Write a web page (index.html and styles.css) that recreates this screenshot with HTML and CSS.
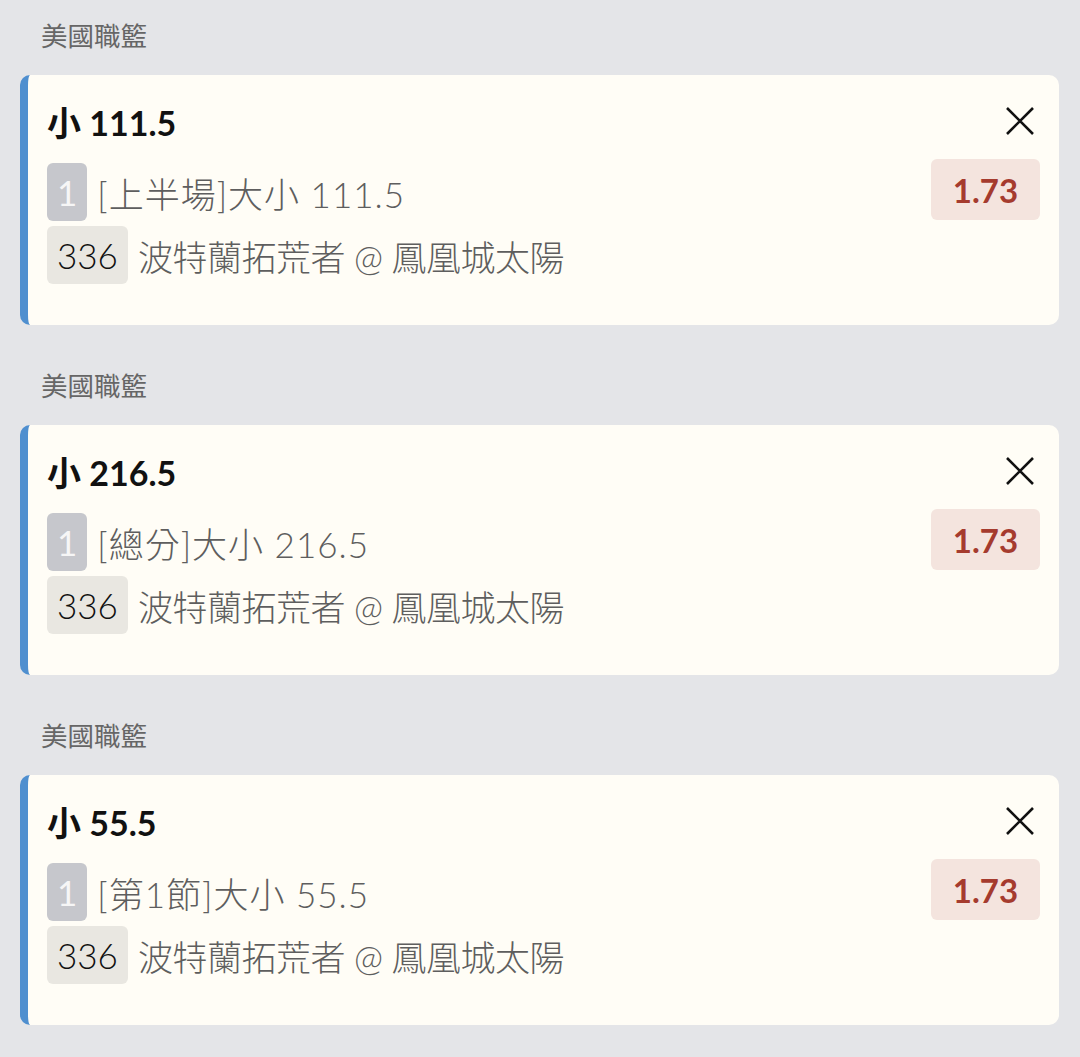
FILE: index.html
```html
<!DOCTYPE html>
<html lang="zh-Hant">
  <head>
    <meta charset="UTF-8" />
    <meta name="viewport" content="width=device-width, initial-scale=1.0" />
    <title>投注單</title>
    <link rel="stylesheet" href="styles.css">
  </head>
  <body>
    <!-- Bet slip: one group per selection -->
    <div class="slip">
      <section class="group">
        <div class="league">美國職籃</div>
        <div class="bet">
          <div class="bet-head">
            <div class="pick">小 111.5</div>
            <button class="close" aria-label="remove">
              <svg viewBox="0 0 30 30" width="30" height="30"><path d="M2 2 L28 28 M28 2 L2 28" stroke="#111" stroke-width="2.6" fill="none"/></svg>
            </button>
          </div>
          <div class="bet-body">
            <div class="lines">
              <div class="line"><span class="tag tag-period">1</span><span class="market">[上半場]大小 111.5</span></div>
              <div class="line"><span class="tag tag-game">336</span><span class="match">波特蘭拓荒者 @ 鳳凰城太陽</span></div>
            </div>
            <div class="odds">1.73</div>
          </div>
        </div>
      </section>

      <section class="group">
        <div class="league">美國職籃</div>
        <div class="bet">
          <div class="bet-head">
            <div class="pick">小 216.5</div>
            <button class="close" aria-label="remove">
              <svg viewBox="0 0 30 30" width="30" height="30"><path d="M2 2 L28 28 M28 2 L2 28" stroke="#111" stroke-width="2.6" fill="none"/></svg>
            </button>
          </div>
          <div class="bet-body">
            <div class="lines">
              <div class="line"><span class="tag tag-period">1</span><span class="market">[總分]大小 216.5</span></div>
              <div class="line"><span class="tag tag-game">336</span><span class="match">波特蘭拓荒者 @ 鳳凰城太陽</span></div>
            </div>
            <div class="odds">1.73</div>
          </div>
        </div>
      </section>

      <section class="group">
        <div class="league">美國職籃</div>
        <div class="bet">
          <div class="bet-head">
            <div class="pick">小 55.5</div>
            <button class="close" aria-label="remove">
              <svg viewBox="0 0 30 30" width="30" height="30"><path d="M2 2 L28 28 M28 2 L2 28" stroke="#111" stroke-width="2.6" fill="none"/></svg>
            </button>
          </div>
          <div class="bet-body">
            <div class="lines">
              <div class="line"><span class="tag tag-period">1</span><span class="market">[第1節]大小 55.5</span></div>
              <div class="line"><span class="tag tag-game">336</span><span class="match">波特蘭拓荒者 @ 鳳凰城太陽</span></div>
            </div>
            <div class="odds">1.73</div>
          </div>
        </div>
      </section>
    </div>
  </body>
</html>
```

FILE: styles.css
```css
* {
  margin: 0;
  padding: 0;
  box-sizing: border-box;
}

html,
body {
  height: 100%;
}

body {
  background-color: #e4e5e8;
  font-family: Lato, 'Noto Sans CJK TC', sans-serif;
  overflow: hidden;
}

.slip {
  padding: 0 21px 0 20px;
}

/* League label above each card */
.league {
  height: 75px;
  display: flex;
  align-items: center;
  padding-left: 21px;
  padding-bottom: 6px;
  font-size: 26.5px;
  color: #666;
  font-family: 'Noto Sans CJK TC', sans-serif;
}

.bet {
  height: 250px;
  margin-bottom: 25px;
  background-color: #fffdf6;
  border-left: 8px solid #4f8fcf;
  border-radius: 10px;
  padding: 20px 19px 0 19px;
}

.bet-head {
  height: 52px;
  display: flex;
  justify-content: space-between;
  align-items: center;
}

.pick {
  font-size: 34px;
  font-weight: bold;
  color: #111;
}

.close {
  width: 40px;
  height: 40px;
  border: none;
  background: none;
  display: flex;
  justify-content: center;
  align-items: center;
  cursor: pointer;
}

.bet-body {
  display: flex;
  justify-content: space-between;
  align-items: flex-start;
  margin-top: 12px;
}

.lines {
  padding-top: 4px;
  display: flex;
  flex-direction: column;
  gap: 5px;
}

.line {
  display: flex;
  align-items: center;
  gap: 10px;
  font-size: 35px;
  font-weight: 300;
  color: #5e5e5e;
}

.market {
  letter-spacing: 1px;
}

.match {
  letter-spacing: -0.5px;
}

.tag {
  height: 58px;
  display: flex;
  align-items: center;
  padding: 0 10px;
  border-radius: 6px;
}

.tag-period {
  background-color: #c6c7cc;
  color: #f6f6f6;
  font-weight: 400;
}

.tag-game {
  background-color: #e9e7e1;
  color: #111;
}

.odds {
  width: 109px;
  height: 61px;
  display: flex;
  justify-content: center;
  align-items: center;
  background-color: #f4e4de;
  border-radius: 6px;
  color: #a53b2e;
  font-size: 33px;
  font-weight: bold;
}
```
